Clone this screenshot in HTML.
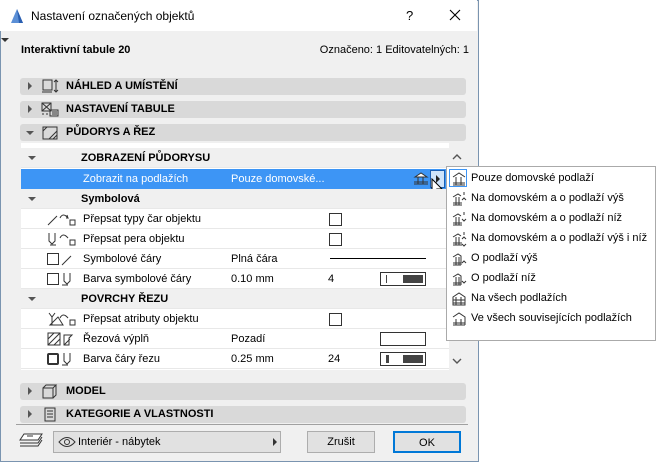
<!DOCTYPE html>
<html><head><meta charset="utf-8"><style>
*{box-sizing:border-box;margin:0;padding:0}
body{width:656px;height:463px;background:#fff;font-family:"Liberation Sans",sans-serif;font-size:11px;color:#000;position:relative;overflow:hidden}
.a{position:absolute}
.win{left:0;top:0;width:479px;height:462px;border:1px solid #7a94b0;background:#f0f0f0}
.title{left:0;top:0;width:477px;height:31px;background:#fff}
.bar{left:20px;width:446px;height:17px;background:#d9d9d9;border-radius:3px;font-weight:bold;font-size:11px}
.bar span{position:absolute;left:46px;top:2px}
.tri{position:absolute;width:0;height:0}
.tr{border-left:4px solid #555;border-top:4px solid transparent;border-bottom:4px solid transparent}
.td{border-top:4px solid #555;border-left:4px solid transparent;border-right:4px solid transparent}
.row{left:21px;width:428px;height:20px;background:#fff;border-bottom:1px solid #e8e8e8}
.row span{position:absolute;top:4px}
.grp{background:#f0f0f0;font-weight:bold}
.cb{position:absolute;left:308px;top:4px;width:13px;height:13px;border:1px solid #333;background:#fff}
.pen{position:absolute;left:359px;top:3px;width:46px;height:14px;border:1px solid #333;background:#fff}
.pen i{position:absolute;left:22px;top:2px;width:20px;height:8px;background:#444}
.pen b{position:absolute;left:5px;top:2px;width:1px;height:8px;background:#444}
.pop{left:446px;top:166px;width:210px;height:175px;border:1px solid #aaa;background:#fff}
.pi{position:absolute;left:24px;font-size:11px}
.btn{height:22px;border:1px solid #adadad;background:#e1e1e1;text-align:center;line-height:20px}
</style></head><body>
<div class="a win"></div>
<div class="a title"></div>
<svg class="a" style="left:9px;top:8px" width="16" height="16"><path d="M2 15 L8 1 L14 15 Z" fill="#5b8fd6"/><path d="M8 1 L14 15 L10 15Z" fill="#2a5fb0"/></svg>
<div class="a" style="left:31px;top:9px;font-size:12px">Nastavení označených objektů</div>
<div class="a" style="left:406px;top:8px;font-size:13px">?</div>
<svg class="a" style="left:449px;top:9px" width="12" height="12"><path d="M1 1L11 11M11 1L1 11" stroke="#000" stroke-width="1.1"/></svg>
<div class="tri td a" style="left:1px;top:38px;border-top-color:#333"></div>
<div class="a" style="left:21px;top:44px;font-weight:bold">Interaktivní tabule 20</div>
<div class="a" style="right:187px;top:44px">Označeno: 1 Editovatelných: 1</div>

<div class="a bar" style="top:78px"><div class="tri tr" style="left:8px;top:4px"></div><svg class="a" style="left:21px;top:1px" width="20" height="15"><rect x="2" y="1" width="9" height="10" fill="none" stroke="#333"/><path d="M1 13h10M15 1v12M13 3l2-2 2 2M13 11l2 2 2-2" stroke="#333" fill="none"/></svg><span>NÁHLED A UMÍSTĚNÍ</span></div>
<div class="a bar" style="top:101px"><div class="tri tr" style="left:8px;top:4px"></div><svg class="a" style="left:21px;top:1px" width="20" height="15"><rect x="1" y="1" width="9" height="8" fill="none" stroke="#333"/><path d="M1 1l9 8M10 1l-9 8" stroke="#333"/><rect x="9" y="8" width="8" height="6" fill="none" stroke="#333"/><path d="M11 10h5M11 12h5M1 12h2M5 12h2" stroke="#333"/></svg><span>NASTAVENÍ TABULE</span></div>
<div class="a bar" style="top:124px"><div class="tri td" style="left:6px;top:7px"></div><svg class="a" style="left:21px;top:1px" width="20" height="15"><rect x="2" y="2" width="14" height="12" fill="none" stroke="#333"/><path d="M8 14L16 6M12 14l4-4M6 2l-4 4" stroke="#333"/></svg><span>PŮDORYS A ŘEZ</span></div>

<div class="a" style="left:21px;top:143px;width:445px;height:227px;background:#fff"></div>
<div class="a" style="left:449px;top:143px;width:17px;height:227px;background:#f0f0f0"></div>
<svg class="a" style="left:452px;top:154px" width="10" height="6"><path d="M1 5l4-4 4 4" stroke="#555" fill="none" stroke-width="1.4"/></svg>
<svg class="a" style="left:452px;top:358px" width="10" height="6"><path d="M1 1l4 4 4-4" stroke="#555" fill="none" stroke-width="1.4"/></svg>

<div class="a row grp" style="top:148px"><div class="tri td" style="left:7px;top:8px"></div><span style="left:60px">ZOBRAZENÍ PŮDORYSU</span></div>
<div class="a row" style="top:169px;background:#3d95f5;color:#fff;border:0"><span style="left:62px">Zobrazit na podlažích</span><span style="left:210px">Pouze domovské...</span>
<svg class="a" style="left:392px;top:3px" width="16" height="14"><path d="M2 5L8 1 14 5Z" fill="#fff" stroke="#333"/><path d="M1 10h14M1 12h14M5 5v7M10 5v7" stroke="#333"/></svg>
<div class="a" style="left:409px;top:1px;width:15px;height:18px;background:#cfe4fb;border:1px solid #1a5fb4"></div><div class="tri tr" style="left:415px;top:6px;border-left-color:#222"></div></div>
<svg class="a" style="left:431px;top:178px" width="14" height="20"><path d="M1 1v14l3-3 3 6 2-1-3-6h5Z" fill="#fff" stroke="#000"/></svg>
<div class="a row grp" style="top:189px"><div class="tri td" style="left:7px;top:8px"></div><span style="left:60px">Symbolová</span></div>
<div class="a row" style="top:209px"><svg class="a" style="left:26px;top:3px" width="30" height="14"><path d="M1 13L10 4M13 6q3-6 8 0l-2 0M21 6l-1-3" stroke="#333" fill="none"/><rect x="23" y="8" width="5" height="5" fill="none" stroke="#333"/></svg><span style="left:62px">Přepsat typy čar objektu</span><div class="cb"></div></div>
<div class="a row" style="top:229px"><svg class="a" style="left:26px;top:3px" width="30" height="14"><path d="M2 1v8l3 3 3-3V1M3 13h6M13 6q3-6 8 0" stroke="#333" fill="none"/><rect x="23" y="8" width="5" height="5" fill="none" stroke="#333"/></svg><span style="left:62px">Přepsat pera objektu</span><div class="cb"></div></div>
<div class="a row" style="top:249px"><div class="a" style="left:26px;top:4px;width:12px;height:12px;border:1px solid #333"></div><svg class="a" style="left:40px;top:3px" width="12" height="14"><path d="M1 13L10 4" stroke="#333"/></svg><span style="left:62px">Symbolové čáry</span><span style="left:210px">Plná čára</span><div class="a" style="left:309px;top:9px;width:96px;height:1px;background:#000"></div></div>
<div class="a row" style="top:269px"><div class="a" style="left:26px;top:4px;width:12px;height:12px;border:1px solid #333"></div><svg class="a" style="left:40px;top:3px" width="12" height="14"><path d="M3 1v8l3 3 3-3V1M1 13h6" stroke="#333" fill="none"/></svg><span style="left:62px">Barva symbolové čáry</span><span style="left:210px">0.10 mm</span><span style="left:307px">4</span><div class="pen"><b></b><i></i></div></div>
<div class="a row grp" style="top:289px"><div class="tri td" style="left:7px;top:8px"></div><span style="left:60px">POVRCHY ŘEZU</span></div>
<div class="a row" style="top:309px"><svg class="a" style="left:26px;top:3px" width="30" height="14"><path d="M2 1l3 4 3-4M5 5v8M3 13l8-8 5 8Z M13 6q3-6 8 0" stroke="#333" fill="none"/><rect x="23" y="8" width="5" height="5" fill="none" stroke="#333"/></svg><span style="left:62px">Přepsat atributy objektu</span><div class="cb"></div></div>
<div class="a row" style="top:329px"><svg class="a" style="left:26px;top:3px" width="30" height="14"><rect x="1" y="1" width="12" height="12" fill="none" stroke="#333"/><path d="M1 7l6-6M1 13L13 1M7 13l6-6" stroke="#333"/><path d="M17 13V3h8l-3 3v7Z M17 13l6-6" stroke="#333" fill="none"/></svg><span style="left:62px">Řezová výplň</span><span style="left:210px">Pozadí</span><div class="pen"></div></div>
<div class="a row" style="top:349px"><div class="a" style="left:26px;top:4px;width:12px;height:12px;border:2px solid #333;border-radius:2px"></div><svg class="a" style="left:40px;top:3px" width="12" height="14"><path d="M3 1v8l3 3 3-3V1M1 13h6" stroke="#333" fill="none"/></svg><span style="left:62px">Barva čáry řezu</span><span style="left:210px">0.25 mm</span><span style="left:307px">24</span><div class="pen"><b style="width:3px"></b><i></i></div></div>

<div class="a bar" style="top:383px"><div class="tri tr" style="left:8px;top:4px"></div><svg class="a" style="left:21px;top:1px" width="20" height="15"><path d="M2 4h10v10H2ZM2 4l3-3h10l-3 3M15 1v10l-3 3" stroke="#333" fill="none"/></svg><span>MODEL</span></div>
<div class="a bar" style="top:406px"><div class="tri tr" style="left:8px;top:4px"></div><svg class="a" style="left:21px;top:1px" width="20" height="15"><rect x="4" y="1" width="10" height="13" fill="none" stroke="#333"/><path d="M6 4h6M6 7h6M6 10h6" stroke="#333"/></svg><span>KATEGORIE A VLASTNOSTI</span></div>
<div class="a" style="left:16px;top:424px;width:452px;height:1px;background:#a0a0a0"></div>
<svg class="a" style="left:18px;top:432px" width="26" height="18"><path d="M6 2h18l-4 6H2Z" fill="#fff" stroke="#333"/><path d="M2 11h18l4-6M2 14h18l4-6M9 4h6" stroke="#333" fill="none"/></svg>
<div class="a btn" style="left:53px;top:431px;width:228px;text-align:left;padding-left:24px">Interiér - nábytek</div>
<svg class="a" style="left:58px;top:436px" width="18" height="12"><path d="M1 6q8-9 16 0q-8 9-16 0Z" fill="none" stroke="#333"/><circle cx="9" cy="6" r="2.5" fill="none" stroke="#333"/></svg>
<div class="tri tr a" style="left:273px;top:438px;border-left-color:#333"></div>
<div class="a btn" style="left:307px;top:431px;width:68px">Zrušit</div>
<div class="a btn" style="left:393px;top:431px;width:68px;border:2px solid #0078d7">OK</div>

<div class="a pop">
<div class="a" style="left:2px;top:2px;width:18px;height:18px;border:1px solid #3d95f5"></div>
<div class="pi" style="top:5px">Pouze domovské podlaží</div>
<div class="pi" style="top:25px">Na domovském a o podlaží výš</div>
<div class="pi" style="top:45px">Na domovském a o podlaží níž</div>
<div class="pi" style="top:65px">Na domovském a o podlaží výš i níž</div>
<div class="pi" style="top:85px">O podlaží výš</div>
<div class="pi" style="top:105px">O podlaží níž</div>
<div class="pi" style="top:125px">Na všech podlažích</div>
<div class="pi" style="top:145px">Ve všech souvisejících podlažích</div>
<svg class="a" style="left:4px;top:2px" width="16" height="172"><g stroke="#333" fill="none">
<path d="M2 8L8 4 14 8M2 14h12M2 16h12M5 8v8M10 8v8"/>
<path d="M2 28L7 25 10 27M2 34h9M2 36h9M5 28v8M8 28v8M13 26v-3M11 31l2-2 2 2"/>
<path d="M2 48L7 45 10 47M2 54h9M2 56h9M5 48v8M8 48v8M13 46v-3M11 50l2 2 2-2"/>
<path d="M2 68L7 65 10 67M2 74h9M2 76h9M5 68v8M8 68v8M13 66v-3M11 70l2-2 2 2M11 75l2 2 2-2"/>
<path d="M2 88L7 85 10 87V96M2 94h8M2 96h8M5 88v8M8 88v8M11 94l2-2 2 2"/>
<path d="M2 108L7 105 10 107V116M2 114h8M2 116h8M5 108v8M8 108v8M11 112l2 2 2-2"/>
<path d="M2 128L8 124 14 128V136H2ZM2 131h12M2 134h12M5 128v8M10 128v8"/>
<path d="M2 148L8 144 14 148V156M2 154h12M2 156h12M5 150v6M10 150v6"/>
</g></svg>
</div>
</body></html>
